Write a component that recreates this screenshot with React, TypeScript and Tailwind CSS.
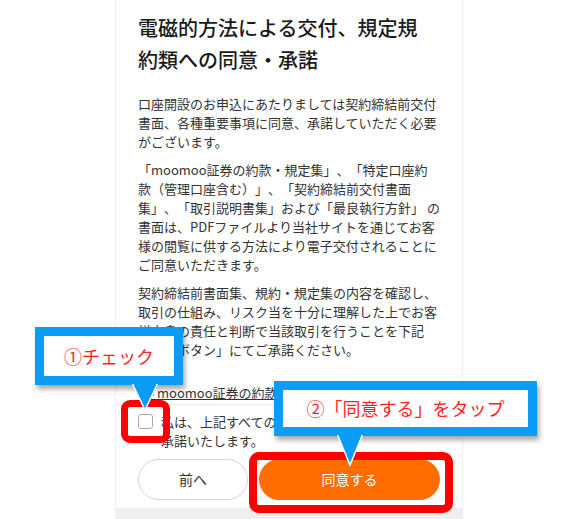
const para2 = [
  '「moomoo証券の約款・規定集」、「特定口座約',
  '款（管理口座含む）」、「契約締結前交付書面',
  '集」、「取引説明書集」および「最良執行方針」 の',
  '書面は、PDFファイルより当社サイトを通じてお客',
  '様の閲覧に供する方法により電子交付されることに',
  'ご同意いただきます。',
];

const para3 = [
  '契約締結前書面集、規約・規定集の内容を確認し、',
  '取引の仕組み、リスク当を十分に理解した上でお客',
  '様自身の責任と判断で当該取引を行うことを下記',
  '「同意ボタン」にてご承諾ください。',
];

function Lines({ lines }: { lines: string[] }) {
  return (
    <p className="mt-[9px] text-[13px] leading-[19px] text-[#333]">
      {lines.map((l) => (
        <span key={l} className="block whitespace-nowrap">
          {l}
        </span>
      ))}
    </p>
  );
}

export default function App() {
  return (
    <div className="relative h-[519px] w-[576px] overflow-hidden bg-white font-['Noto_Sans_CJK_JP',sans-serif] [text-spacing-trim:space-all]">
      {/* phone screen */}
      <div className="ml-[115px] flex h-full w-[348px] flex-col border-x border-[#efefef] bg-white">
        <div className="px-[22px] pt-[12px]">
          <h1 className="text-[20px] leading-[32px] font-medium text-[#1a1a1a]">
            電磁的方法による交付、規定規
            <br />
            約類への同意・承諾
          </h1>
          <div className="mt-[18px]">
            <Lines
              lines={[
                '口座開設のお申込にあたりましては契約締結前交付',
                '書面、各種重要事項に同意、承諾していただく必要',
                'がございます。',
              ]}
            />
            <Lines lines={para2} />
            <Lines lines={para3} />
          </div>
          <p className="mt-[24px] ml-[6px] text-[13px] leading-[19px] text-[#333] underline">
            「moomoo証券の約款・規定集」
          </p>
        </div>

        <div className="mt-[2px] border-t border-[#ececec] px-[22px] pt-[7px]">
          <div className="flex gap-[8px]">
            <span className="mt-[2px] h-[15px] w-[15px] shrink-0 rounded-[3px] border-[1.5px] border-[#a8a8a8]" />
            <p className="text-[13px] leading-[19px] text-[#333]">
              <span className="block whitespace-nowrap">私は、上記すべての内容を確認の上、同意・</span>
              <span className="block">承諾いたします。</span>
            </p>
          </div>
          <div className="mt-[9px] flex gap-[11px]">
            <button className="h-[41px] w-[110px] rounded-full border border-[#d6d6d6] bg-white text-[14px] text-[#333]">
              前へ
            </button>
            <button className="h-[41px] flex-1 rounded-full bg-[#ff6d00] text-[14px] text-white">
              同意する
            </button>
          </div>
        </div>
        <div className="flex-1" />
        <div className="h-[11px] bg-[#efefef]" />
      </div>

      {/* red highlight frames */}
      <div className="absolute left-[121px] top-[400px] h-[43px] w-[49px] rounded-[9px] border-[7px] border-[#ff0000]" />
      <div className="absolute left-[249px] top-[452px] h-[61px] w-[204px] rounded-[10px] border-[8px] border-[#ff0000]" />

      {/* callout 1 */}
      <div className="absolute left-[35px] top-[327px] h-[58px] w-[148px] bg-[#0a9cf7] p-[9px] shadow-[2px_4px_5px_rgba(0,0,0,0.35)]">
        <div className="flex h-full items-center justify-center bg-white text-[18px] text-[#ff1f1f]">
          ①チェック
        </div>
      </div>
      <svg className="absolute left-[131px] top-[384px]" width="28" height="28" viewBox="0 0 28 28">
        <polygon points="2,1 26,1 14,26" fill="#0a9cf7" stroke="#fff" strokeWidth="1.5" />
        <rect x="3" y="0" width="22" height="2" fill="#0a9cf7" />
      </svg>

      {/* callout 2 */}
      <div className="absolute left-[274px] top-[381px] h-[55px] w-[263px] bg-[#0a9cf7] p-[9px] shadow-[2px_4px_5px_rgba(0,0,0,0.35)]">
        <div className="flex h-full items-center justify-center bg-white text-[18px] text-[#ff1f1f]">
          ②「同意する」をタップ
        </div>
      </div>
      <svg className="absolute left-[336px] top-[435px]" width="28" height="32" viewBox="0 0 28 32">
        <polygon points="2,1 26,1 14,30" fill="#0a9cf7" stroke="#fff" strokeWidth="1.5" />
        <rect x="3" y="0" width="22" height="2" fill="#0a9cf7" />
      </svg>
    </div>
  );
}
